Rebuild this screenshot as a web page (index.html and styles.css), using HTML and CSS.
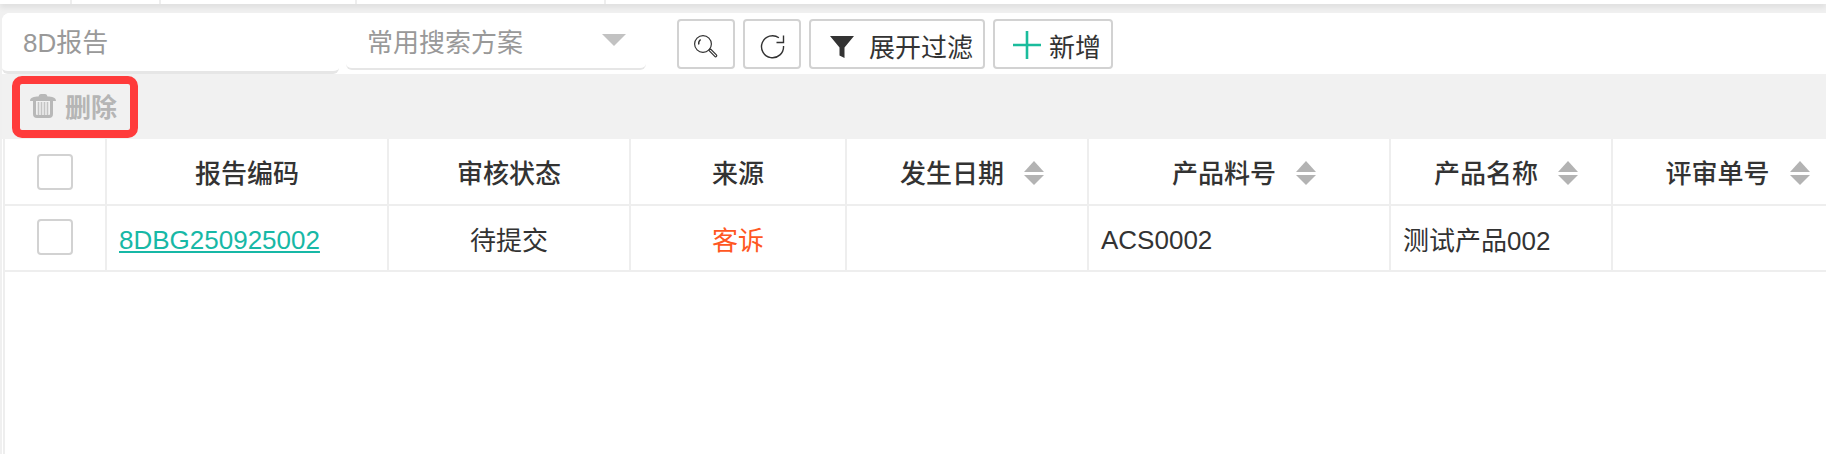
FILE: index.html
```html
<!DOCTYPE html>
<html lang="zh-CN">
<head>
<meta charset="utf-8">
<title>8D报告</title>
<link rel="stylesheet" href="styles.css">
</head>
<body>
<div class="topstrip">
  <span class="tc tc1"></span><span class="tc tc2"></span><span class="tc tc3"></span><span class="tc tc4"></span>
</div>
<div class="page">
  <div class="toolbar">
    <div class="title">8D报告</div>
    <div class="select"><span>常用搜索方案</span><i class="caret"></i></div>
    <button class="btn btn-icon" type="button" aria-label="搜索">
      <svg width="28" height="28" viewBox="0 0 28 28" fill="none" stroke="#333" stroke-width="1.2"><g transform="translate(0 1)"><circle cx="11" cy="12" r="8.400"/><path d="M6.800 12.500a5 5 0 0 1 1.800-5" stroke-width="1.400"/><path d="M17 18l1.600-1 5.800 5.800c.8.800.3 1.200 0 1.600-.4.400-1 .7-1.600 0L17.400 19z"/></g></svg>
    </button>
    <button class="btn btn-icon" type="button" aria-label="刷新">
      <svg width="26" height="28" viewBox="0 0 26 28" fill="none" stroke="#333" stroke-width="1.4"><g transform="translate(1 2)"><path d="M23.500 13a11 11 0 1 1-4.600-8.200"/><path d="M23.500 2.500V9.500h-7"/></g></svg>
    </button>
    <button class="btn btn-filter" type="button">
      <svg class="funnel" width="24" height="22" viewBox="0 0 24 22"><path fill="#333" d="M0 0h24l-9.500 11.500V22l-5-2.500v-8z"/></svg>
      <span>展开过滤</span>
    </button>
    <button class="btn btn-add" type="button">
      <svg width="28" height="28" viewBox="0 0 28 28"><path stroke="#1abc9c" stroke-width="2.600" d="M14 0v28M0 14h28"/></svg>
      <span>新增</span>
    </button>
  </div>
  <div class="actions">
    <button class="del" type="button">
      <svg width="26" height="24" viewBox="0 0 26 24" fill="none"><path fill="#b8b8b8" d="M0 7C0 3.500 4 2.500 8.500 2.500 9 .8 9.800 0 11 0h4c1.200 0 2 .8 2.500 2.500C22 2.500 26 3.500 26 7z"/><path stroke="#b8b8b8" stroke-width="3" d="M4.500 7v13c0 1.800 1 2.500 2.500 2.500h12c1.500 0 2.500-.7 2.500-2.500V7"/><path stroke="#c4c4c4" stroke-width="1.600" d="M8.500 8v13M11.500 8v13M14.500 8v13M17.500 8v13"/></svg>
      <span>删除</span>
    </button>
  </div>
  <div class="gridwrap">
    <table class="grid">
      <colgroup>
        <col class="c0"><col class="c1"><col class="c2"><col class="c3"><col class="c4"><col class="c5"><col class="c6"><col class="c7">
      </colgroup>
      <thead>
        <tr>
          <th><span class="check"></span></th>
          <th>报告编码</th>
          <th>审核状态</th>
          <th>来源</th>
          <th class="sortable"><span class="thw">发生日期<i class="sort"></i></span></th>
          <th class="sortable"><span class="thw">产品料号<i class="sort"></i></span></th>
          <th class="sortable"><span class="thw">产品名称<i class="sort"></i></span></th>
          <th class="sortable"><span class="thw">评审单号<i class="sort"></i></span></th>
        </tr>
      </thead>
      <tbody>
        <tr>
          <td class="ctr"><span class="check row-check"></span></td>
          <td class="latin"><a href="#" class="link">8DBG250925002</a></td>
          <td class="ctr">待提交</td>
          <td class="ctr src">客诉</td>
          <td></td>
          <td class="latin">ACS0002</td>
          <td>测试产品002</td>
          <td></td>
        </tr>
      </tbody>
    </table>
  </div>
</div>
</body>
</html>
```

FILE: styles.css
```css
html, body {
  margin: 0;
  height: 454px;
  overflow: hidden;
  background: #f0f0f0;
}
body {
  font-family: "Liberation Sans", "Noto Sans CJK SC", sans-serif;
  font-size: 26px;
  color: #333;
}
.topstrip {
  display: flex;
  height: 4px;
  background: #fff;
  box-shadow: 0 2px 6px rgba(0, 0, 0, 0.13);
}
.tc { border-right: 2px solid #eee; }
.tc1 { width: 70px; }
.tc2 { width: 87px; }
.tc3 { width: 194px; }
.tc4 { width: 247px; }
.page {
  margin: 9px 0 0 2px;
  height: 441px;
  background: #fff;
  border-top-left-radius: 8px;
  overflow: hidden;
}
.toolbar {
  display: flex;
  align-items: flex-start;
  height: 61px;
  background: #fff;
}
.title {
  box-sizing: border-box;
  width: 337px;
  height: 61px;
  padding: 14px 0 0 21px;
  line-height: 32px;
  color: #999;
  border-bottom: 3px solid #e6e6e6;
  border-radius: 0 0 6px 6px;
}
.select {
  box-sizing: border-box;
  display: flex;
  align-items: center;
  justify-content: space-between;
  width: 300px;
  height: 57px;
  margin-left: 7px;
  padding: 0 20px 1px 21px;
  color: #999;
  border-bottom: 2px solid #e6e6e6;
  border-radius: 0 0 6px 6px;
}
.caret {
  width: 0;
  height: 0;
  border-left: 12px solid transparent;
  border-right: 12px solid transparent;
  border-top: 12px solid #c2c2c2;
}
.btn {
  box-sizing: border-box;
  display: flex;
  align-items: center;
  height: 50px;
  margin-top: 6px;
  padding: 2px 0 0;
  background: #fff;
  border: 2px solid #d2d2d2;
  border-radius: 4px;
  font: inherit;
  color: #333;
}
.btn-icon {
  width: 58px;
  justify-content: center;
  margin-left: 8px;
}
.select + .btn { margin-left: 31px; }
.btn-filter {
  width: 176px;
  margin-left: 8px;
  padding-left: 19px;
  gap: 15px;
}
.funnel { margin-top: 4px; }
.btn-add {
  width: 120px;
  margin-left: 8px;
  padding-left: 18px;
  gap: 8px;
}
.actions {
  box-sizing: border-box;
  height: 65px;
  padding: 2px 0 0 10px;
  background: #f1f1f1;
}
.del {
  box-sizing: border-box;
  display: flex;
  align-items: center;
  gap: 9px;
  width: 126px;
  height: 62px;
  padding: 0 0 3px 10px;
  background: #f1f1f1;
  border: 8px solid #ff3b3b;
  border-radius: 10px;
  font: inherit;
  font-weight: 700;
  color: #b5b5b5;
}
.gridwrap {
  margin-left: 1px;
  height: 315px;
  border-left: 2px solid #eee;
  overflow: hidden;
}
.grid {
  table-layout: fixed;
  border-collapse: separate;
  border-spacing: 0;
  width: 1849px;
}
.c0 { width: 102px; }
.c1 { width: 282px; }
.c2 { width: 242px; }
.c3 { width: 216px; }
.c4 { width: 242px; }
.c5 { width: 302px; }
.c6 { width: 222px; }
.c7 { width: 241px; }
th, td {
  box-sizing: border-box;
  padding: 0 12px;
  border-right: 2px solid #eee;
  border-bottom: 2px solid #eee;
  background: #fff;
  vertical-align: middle;
  overflow: hidden;
  white-space: nowrap;
}
th {
  height: 67px;
  font-weight: 500;
  text-align: center;
}
td { height: 66px; font-weight: 400; }
td.ctr { text-align: center; }
td.latin { padding-top: 5px; }
.check {
  box-sizing: border-box;
  display: inline-block;
  width: 36px;
  height: 36px;
  border: 2px solid #d2d2d2;
  border-radius: 4px;
  vertical-align: middle;
}
.row-check { margin-bottom: 2px; }
.link { color: #17b8a6; text-decoration: underline; }
.src { color: #ff5722; }
.sortable { padding-left: 22px; }
.thw {
  display: inline-flex;
  align-items: center;
  gap: 20px;
}
.sort {
  position: relative;
  display: inline-block;
  width: 20px;
  height: 24px;
  margin-top: 3px;
}
.sort::before, .sort::after {
  content: "";
  position: absolute;
  left: 0;
  border-left: 10px solid transparent;
  border-right: 10px solid transparent;
}
.sort::before { top: 0; border-bottom: 11px solid #b3b3b3; }
.sort::after { top: 14px; border-top: 10px solid #b3b3b3; }
```
